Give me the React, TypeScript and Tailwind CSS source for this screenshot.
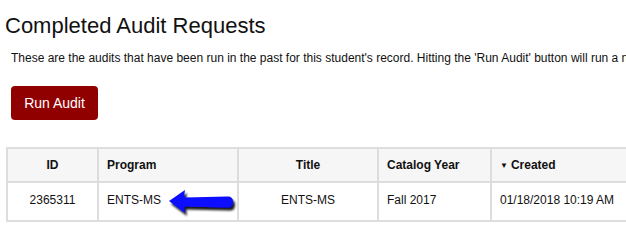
import React from "react";

const Arrow = () => (
  <svg
    width="72"
    height="32"
    viewBox="0 0 72 32"
    className="absolute left-[68px] top-[3px]"
  >
    <defs>
      <filter id="arrowShadow" x="-20%" y="-40%" width="140%" height="180%">
        <feDropShadow dx="2" dy="3" stdDeviation="1.2" floodColor="#000" floodOpacity="0.9" />
      </filter>
    </defs>
    <path
      d="M2 15 L18 4 Q17 9 17.5 11.5 L61 10.5 Q66 10.5 66 16 Q66 21.5 61 21.5 L17.5 20.5 Q17 23 18 27 Z"
      fill="#0b0bff"
      filter="url(#arrowShadow)"
    />
  </svg>
);

const App = () => {
  return (
    <div className="w-[626px] h-[242px] overflow-hidden bg-white px-[5px] font-['Liberation_Sans',Arial,sans-serif] text-[#111]">
      <h1 className="pt-[14px] text-[22px] leading-[24px] font-normal">Completed Audit Requests</h1>
      <p className="mt-[12px] pl-[6px] whitespace-nowrap text-[12px] leading-[16px]">
        These are the audits that have been run in the past for this student's record. Hitting the 'Run Audit' button will run a new audit.
      </p>
      <button className="mt-[20px] ml-[6px] h-[34px] w-[87px] rounded-[4px] bg-[#910000] text-[14px] text-white">
        Run Audit
      </button>
      <table className="mt-[27px] ml-[1px] w-[660px] table-fixed border-collapse text-[12px] text-[#111]">
        <thead>
          <tr className="h-[34px] bg-[#f6f6f6]">
            <th className="w-[91px] border-2 border-[#dddddd] text-center font-bold">ID</th>
            <th className="w-[140px] border-2 border-[#dddddd] pl-[8px] text-left font-bold">Program</th>
            <th className="w-[140px] border-2 border-[#dddddd] text-center font-bold">Title</th>
            <th className="w-[113px] border-2 border-[#dddddd] pl-[8px] text-left font-bold">Catalog Year</th>
            <th className="border-2 border-[#dddddd] pl-[8px] text-left font-bold">
              <span className="mr-[3px] inline-block align-middle text-[8px]">▼</span>Created
            </th>
          </tr>
        </thead>
        <tbody>
          <tr className="h-[39px]">
            <td className="border-2 border-[#dddddd] pb-[4px] text-center">2365311</td>
            <td className="relative border-2 border-[#dddddd] pb-[4px] pl-[8px]">
              ENTS-MS
              <Arrow />
            </td>
            <td className="border-2 border-[#dddddd] pb-[4px] text-center">ENTS-MS</td>
            <td className="border-2 border-[#dddddd] pb-[4px] pl-[8px]">Fall 2017</td>
            <td className="border-2 border-[#dddddd] pb-[4px] pl-[8px]">01/18/2018 10:19 AM</td>
          </tr>
        </tbody>
      </table>
    </div>
  );
};

export default App;
